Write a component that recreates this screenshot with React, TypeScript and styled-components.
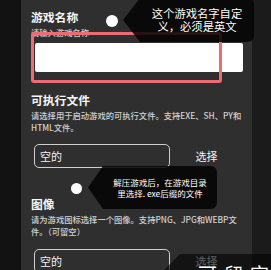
import styled, { createGlobalStyle } from "styled-components";

const GlobalStyle = createGlobalStyle`
    html, body {
        margin: 0;
        padding: 0;
        background: #121212;
    }
    * {
        box-sizing: border-box;
    }
`

const Root = styled.div`
    position: relative;
    display: flex;
    width: 271px;
    height: 270px;
    overflow: hidden;
    font-family: "Noto Sans CJK SC", "Noto Sans", sans-serif;
`

const Gutter = styled.div`
    width: 21px;
    flex-shrink: 0;
    background: #121212;
`

const SideBar = styled.div`
    width: 19px;
    flex-shrink: 0;
    background: #1b1b1b;
`

const Panel = styled.div`
    flex: 1;
    background: #2f2f2f;
    padding: 8px 9px 0 10px;
`

const Section = styled.section<{ $gap: number }>`
    display: flex;
    flex-direction: column;
    margin-top: ${props => props.$gap}px;
`

const Title = styled.h2`
    margin: 0;
    font-size: 11.8px;
    line-height: 18px;
    font-weight: 700;
    color: #f7f7f7;
`

const Hint = styled.p`
    margin: 0;
    font-size: 8.3px;
    line-height: 12px;
    font-weight: 500;
    color: #d2d2d2;
    white-space: nowrap;
`

const NameInput = styled.div`
    margin: 5px 0 0 4px;
    height: 29px;
    background: #ffffff;
    border-radius: 2px;
`

const FileRow = styled.div<{ $gap: number }>`
    display: flex;
    align-items: center;
    margin-top: ${props => props.$gap}px;
`

const Field = styled.div`
    width: 136px;
    height: 24px;
    margin-left: 3px;
    padding-left: 5px;
    display: flex;
    align-items: center;
    border: 1.5px solid #cfcfcf;
    border-radius: 5px;
    font-size: 11px;
    color: #f2f2f2;
`

const PickButton = styled.div`
    flex: 1;
    text-align: center;
    font-size: 11px;
    color: #f2f2f2;
`

/* annotation overlays */

const Highlight = styled.div`
    position: absolute;
    left: 31px;
    top: 32px;
    width: 191px;
    height: 51px;
    border: 3.5px solid #ef6b72;
    border-radius: 3px;
`

const Dot = styled.div<{ $x: number; $y: number; $size: number }>`
    position: absolute;
    left: ${props => props.$x - props.$size / 2}px;
    top: ${props => props.$y - props.$size / 2}px;
    width: ${props => props.$size}px;
    height: ${props => props.$size}px;
    border-radius: 50%;
    background: #ffffff;
`

const CalloutBox = styled.div<{ $x: number; $y: number; $w: number; $h: number }>`
    position: absolute;
    left: ${props => props.$x}px;
    top: ${props => props.$y}px;
    width: ${props => props.$w}px;
    height: ${props => props.$h}px;
    svg {
        position: absolute;
        inset: 0;
    }
`

const CalloutText = styled.div<{ $tip: number; $size: number; $line: number }>`
    position: absolute;
    top: 0;
    bottom: 0;
    left: ${props => props.$tip}px;
    right: 0;
    display: flex;
    flex-direction: column;
    align-items: center;
    justify-content: center;
    font-size: ${props => props.$size}px;
    line-height: ${props => props.$line}px;
    color: #ffffff;
    text-align: center;
    white-space: nowrap;
`

const BigNote = styled.div`
    position: absolute;
    left: 38px;
    top: 10px;
    font-size: 19px;
    line-height: 19px;
    letter-spacing: 7px;
    color: #ffffff;
    white-space: nowrap;
`

interface CalloutProps {
    x: number;
    y: number;
    w: number;
    h: number;
    tip: number;
    alpha: number;
    children?: React.ReactNode;
}

function Callout({ x, y, w, h, tip, alpha, children }: CalloutProps) {
    const r = 7;
    const d = `M0 ${h / 2} L${tip} 0 H${w - r} Q${w} 0 ${w} ${r} V${h - r} Q${w} ${h} ${w - r} ${h} H${tip} Z`;
    return (
        <CalloutBox $x={x} $y={y} $w={w} $h={h}>
            <svg width={w} height={h} viewBox={`0 0 ${w} ${h}`}>
                <path d={d} fill={`rgba(4,4,4,${alpha})`} />
            </svg>
            {children}
        </CalloutBox>
    );
}

function App() {
    return (
        <Root>
            <GlobalStyle />
            <Gutter />
            <Panel>
                <Section $gap={0}>
                    <Title>游戏名称</Title>
                    <Hint>请输入游戏名称</Hint>
                    <NameInput />
                </Section>
                <Section $gap={19}>
                    <Title>可执行文件</Title>
                    <Hint>
                        请选择用于启动游戏的可执行文件。支持EXE、SH、PY和<br />
                        HTML文件。
                    </Hint>
                    <FileRow $gap={11}>
                        <Field>空的</Field>
                        <PickButton>选择</PickButton>
                    </FileRow>
                </Section>
                <Section $gap={27}>
                    <Title>图像</Title>
                    <Hint>
                        请为游戏图标选择一个图像。支持PNG、JPG和WEBP文<br />
                        件。（可留空）
                    </Hint>
                    <FileRow $gap={12}>
                        <Field>空的</Field>
                        <PickButton>选择</PickButton>
                    </FileRow>
                </Section>
            </Panel>
            <SideBar />

            <Highlight />
            <Dot $x={112} $y={21} $size={12} />
            <Callout x={123} y={-2} w={131} h={44} tip={17} alpha={0.86}>
                <CalloutText $tip={17} $size={11.3} $line={13.5}>
                    <span>这个游戏名字自定</span>
                    <span>义，必须是英文</span>
                </CalloutText>
            </Callout>
            <Dot $x={76} $y={188} $size={11} />
            <Callout x={88} y={166} w={129} h={43} tip={15} alpha={0.86}>
                <CalloutText $tip={15} $size={8.5} $line={11}>
                    <span>解压游戏后，在游戏目录</span>
                    <span>里选择. exe后缀的文件</span>
                </CalloutText>
            </Callout>
            <Callout x={160} y={254} w={130} h={40} tip={20} alpha={0.62}>
                <BigNote>可留空</BigNote>
            </Callout>
        </Root>
    );
}

export default App;
